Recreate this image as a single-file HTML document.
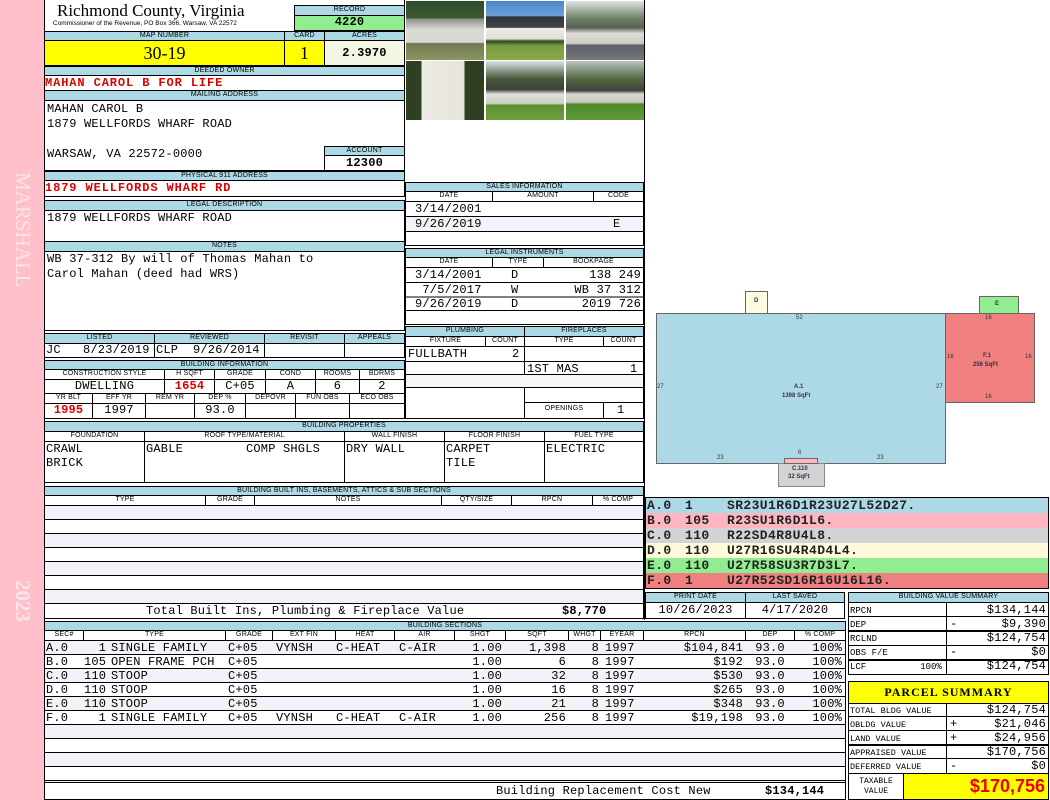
<!DOCTYPE html>
<html><head><meta charset="utf-8"><style>
*{margin:0;padding:0;box-sizing:border-box}
body{width:1050px;height:800px;position:relative;background:#fff;overflow:hidden;font-family:"Liberation Mono",monospace;font-size:12px;letter-spacing:.2px;color:#000}
div{position:absolute}
.b{border:1px solid #000}
.h{background:#add8e6;border:1px solid #000;font-family:"Liberation Sans",sans-serif;font-size:7px;text-align:center;line-height:8px;letter-spacing:.2px;white-space:nowrap;overflow:hidden}
.s{border:1px solid #000;font-family:"Liberation Sans",sans-serif;font-size:7px;letter-spacing:.2px;text-align:center;line-height:8px;white-space:nowrap;overflow:hidden}
.v{border:1px solid #000;white-space:pre;line-height:13px;overflow:hidden}
.r{text-align:right;padding-right:3px}
.c{text-align:center}
.red{color:#d00;font-weight:bold}
.ph{border:1px solid #fff;overflow:hidden}
.sk{font-family:"Liberation Sans",sans-serif;font-size:6px;letter-spacing:0;color:#334;white-space:nowrap}
.col{white-space:pre;line-height:14px;top:641px}
.cd{white-space:pre;line-height:15px;font-size:13px;letter-spacing:.4px;color:#222;font-weight:bold;top:498px}
</style></head><body>
<div style="left:0;top:0;width:44px;height:800px;background:#ffc0cb"></div>
<div style="left:44px;top:0;width:1px;height:800px;background:#000"></div>
<div style="left:10px;top:172px;width:26px;height:112px;"><div style="left:26px;top:0;transform-origin:0 0;transform:rotate(90deg);font-family:'Liberation Serif',serif;font-size:21px;letter-spacing:0;color:#fbe4e8;white-space:nowrap;line-height:26px">MARSHALL</div></div>
<div style="left:10px;top:580px;width:26px;height:50px;"><div style="left:26px;top:0;transform-origin:0 0;transform:rotate(90deg);font-family:'Liberation Serif',serif;font-size:21px;letter-spacing:0;color:#fbe4e8;white-space:nowrap;line-height:26px;font-weight:bold">2023</div></div>

<div style="left:57px;top:1px;font-family:'Liberation Serif',serif;font-size:17px;letter-spacing:0;line-height:20px;white-space:nowrap">Richmond County, Virginia</div>
<div style="left:53px;top:20px;font-family:'Liberation Sans',sans-serif;font-size:6.5px;letter-spacing:0;line-height:8px;white-space:nowrap">Commissioner of the Revenue, PO Box 366, Warsaw, VA 22572</div>
<div class="h" style="left:294px;top:5px;width:111px;height:11px">RECORD</div>
<div class="v c" style="left:294px;top:15px;width:111px;height:16px;background:#90ee90;font-weight:bold">4220</div>

<div class="h" style="left:44px;top:31px;width:241px;height:10px">MAP NUMBER</div>
<div class="h" style="left:284px;top:31px;width:41px;height:10px">CARD</div>
<div class="h" style="left:324px;top:31px;width:81px;height:10px">ACRES</div>
<div class="b" style="left:44px;top:40px;width:241px;height:26px;background:#ffff00;font-family:'Liberation Serif',serif;font-size:18px;letter-spacing:0;text-align:center;line-height:24px">30-19</div>
<div class="b" style="left:284px;top:40px;width:41px;height:26px;background:#ffff00;font-family:'Liberation Serif',serif;font-size:18px;text-align:center;line-height:24px">1</div>
<div class="b" style="left:324px;top:40px;width:81px;height:26px;background:#f5f5e3;text-align:center;line-height:24px;font-weight:bold">2.3970</div>

<div class="h" style="left:44px;top:66px;width:361px;height:10px">DEEDED OWNER</div>
<div class="v red" style="left:44px;top:75px;width:361px;height:16px;line-height:15px;letter-spacing:.9px">MAHAN CAROL B FOR LIFE</div>
<div class="h" style="left:44px;top:90px;width:361px;height:11px">MAILING ADDRESS</div>
<div class="b" style="left:44px;top:100px;width:361px;height:71px;white-space:pre;line-height:15px;padding:1px 0 0 2px">MAHAN CAROL B
1879 WELLFORDS WHARF ROAD

WARSAW, VA 22572-0000</div>
<div class="h" style="left:324px;top:146px;width:81px;height:10px">ACCOUNT</div>
<div class="v c" style="left:324px;top:155px;width:81px;height:16px;font-weight:bold;line-height:15px">12300</div>
<div class="h" style="left:44px;top:171px;width:361px;height:10px">PHYSICAL 911 ADDRESS</div>
<div class="v red" style="left:44px;top:180px;width:361px;height:17px;line-height:15px;letter-spacing:.9px">1879 WELLFORDS WHARF RD</div>

<div class="h" style="left:44px;top:200px;width:361px;height:11px">LEGAL DESCRIPTION</div>
<div class="v" style="left:44px;top:210px;width:361px;height:32px;padding-left:2px;line-height:15px">1879 WELLFORDS WHARF ROAD</div>
<div class="h" style="left:44px;top:241px;width:361px;height:11px">NOTES</div>
<div class="v" style="left:44px;top:251px;width:361px;height:80px;padding-left:2px;line-height:15px">WB 37-312 By will of Thomas Mahan to
Carol Mahan (deed had WRS)</div>

<div class="h" style="left:44px;top:333px;width:111px;height:11px">LISTED</div>
<div class="h" style="left:154px;top:333px;width:111px;height:11px">REVIEWED</div>
<div class="h" style="left:264px;top:333px;width:81px;height:11px">REVISIT</div>
<div class="h" style="left:344px;top:333px;width:61px;height:11px">APPEALS</div>
<div class="v" style="left:44px;top:343px;width:111px;height:15px;padding-left:1px">JC   8/23/2019</div>
<div class="v" style="left:154px;top:343px;width:111px;height:15px;padding-left:1px">CLP  9/26/2014</div>
<div class="v" style="left:264px;top:343px;width:81px;height:15px"></div>
<div class="v" style="left:344px;top:343px;width:61px;height:15px"></div>

<div class="h" style="left:44px;top:360px;width:361px;height:10px">BUILDING INFORMATION</div>
<div class="s" style="left:44px;top:369px;width:121px;height:11px">CONSTRUCTION STYLE</div>
<div class="s" style="left:164px;top:369px;width:51px;height:11px">H SQFT</div>
<div class="s" style="left:214px;top:369px;width:52px;height:11px">GRADE</div>
<div class="s" style="left:265px;top:369px;width:51px;height:11px">COND</div>
<div class="s" style="left:315px;top:369px;width:45px;height:11px">ROOMS</div>
<div class="s" style="left:359px;top:369px;width:46px;height:11px">BDRMS</div>
<div class="v c" style="left:44px;top:379px;width:121px;height:15px">DWELLING</div>
<div class="v c red" style="left:164px;top:379px;width:51px;height:15px">1654</div>
<div class="v c" style="left:214px;top:379px;width:52px;height:15px">C+05</div>
<div class="v c" style="left:265px;top:379px;width:51px;height:15px">A</div>
<div class="v c" style="left:315px;top:379px;width:45px;height:15px">6</div>
<div class="v c" style="left:359px;top:379px;width:46px;height:15px">2</div>
<div class="s" style="left:44px;top:393px;width:49px;height:11px">YR BLT</div>
<div class="s" style="left:92px;top:393px;width:54px;height:11px">EFF YR</div>
<div class="s" style="left:145px;top:393px;width:50px;height:11px">REM YR</div>
<div class="s" style="left:194px;top:393px;width:52px;height:11px">DEP %</div>
<div class="s" style="left:245px;top:393px;width:51px;height:11px">DEPOVR</div>
<div class="s" style="left:295px;top:393px;width:55px;height:11px">FUN OBS</div>
<div class="s" style="left:349px;top:393px;width:56px;height:11px">ECO OBS</div>
<div class="v c red" style="left:44px;top:403px;width:49px;height:16px">1995</div>
<div class="v c" style="left:92px;top:403px;width:54px;height:16px">1997</div>
<div class="v" style="left:145px;top:403px;width:50px;height:16px"></div>
<div class="v c" style="left:194px;top:403px;width:52px;height:16px">93.0</div>
<div class="v" style="left:245px;top:403px;width:51px;height:16px"></div>
<div class="v" style="left:295px;top:403px;width:55px;height:16px"></div>
<div class="v" style="left:349px;top:403px;width:56px;height:16px"></div>

<div class="ph" style="left:405px;top:0;width:80px;height:61px;background:linear-gradient(#2f4d2a 0,#3b5a33 30%,#8a8f88 30%,#d9d9d4 48%,#d9d9d4 70%,#6f7a55 72%,#8c9460 100%)"></div>
<div class="ph" style="left:485px;top:0;width:80px;height:61px;background:linear-gradient(#4d86c8 0,#6ea0d8 25%,#2e3338 27%,#444 45%,#ecebe5 46%,#e0ded6 64%,#2f4a22 68%,#7a9a40 76%,#8aaa48 100%)"></div>
<div class="ph" style="left:565px;top:0;width:80px;height:61px;background:linear-gradient(#dfe3e2 0,#6e8063 30%,#595f5a 45%,#dddcd6 55%,#cfcbc2 72%,#5d6068 75%,#777 100%)"></div>
<div class="ph" style="left:405px;top:60px;width:80px;height:61px;background:linear-gradient(90deg,#2d4022 0,#2d4022 20%,#ecebe4 20%,#e6e4da 75%,#2e3f21 75%)"></div>
<div class="ph" style="left:485px;top:60px;width:80px;height:61px;background:linear-gradient(#d9e3e6 0,#48593c 30%,#3a4038 48%,#e0e0da 56%,#cfd0c8 72%,#5c8f32 75%,#6fa03a 100%)"></div>
<div class="ph" style="left:565px;top:60px;width:80px;height:61px;background:linear-gradient(#b8c4c0 0,#556a40 30%,#3c4240 50%,#d9d9d2 56%,#c9c9c0 70%,#4f8a2a 73%,#5f9a36 100%)"></div>
<div style="left:404px;top:0;width:1px;height:121px;background:#000"></div>
<div style="left:644px;top:0;width:1px;height:620px;background:#000"></div>

<div class="h" style="left:405px;top:182px;width:239px;height:10px">SALES INFORMATION</div>
<div class="s" style="left:405px;top:191px;width:88px;height:11px">DATE</div>
<div class="s" style="left:492px;top:191px;width:102px;height:11px">AMOUNT</div>
<div class="s" style="left:593px;top:191px;width:51px;height:11px">CODE</div>
<div class="b" style="left:405px;top:201px;width:239px;height:45px"></div>
<div style="left:406px;top:216px;width:237px;height:16px;background:#f1f3f8;border-top:1px solid #000;border-bottom:1px solid #000"></div>
<div style="left:415px;top:202px;white-space:pre;line-height:15px">3/14/2001
9/26/2019</div>
<div style="left:613px;top:217px">E</div>

<div class="h" style="left:405px;top:248px;width:239px;height:10px">LEGAL INSTRUMENTS</div>
<div class="s" style="left:405px;top:257px;width:88px;height:11px">DATE</div>
<div class="s" style="left:492px;top:257px;width:52px;height:11px">TYPE</div>
<div class="s" style="left:543px;top:257px;width:101px;height:11px">BOOKPAGE</div>
<div class="b" style="left:405px;top:267px;width:239px;height:58px"></div>
<div style="left:406px;top:282px;width:237px;height:29px;border-top:1px solid #000;border-bottom:1px solid #000;background:linear-gradient(#fff 50%,#000 50%,#000 calc(50% + 1px),#fff calc(50% + 1px))"></div>
<div style="left:415px;top:268px;white-space:pre;line-height:14.5px">3/14/2001
 7/5/2017
9/26/2019</div>
<div style="left:511px;top:268px;white-space:pre;line-height:14.5px">D
W
D</div>
<div style="left:545px;top:268px;width:96px;text-align:right;white-space:pre;line-height:14.5px">138 249
WB 37 312
2019 726</div>

<div class="h" style="left:405px;top:326px;width:120px;height:11px">PLUMBING</div>
<div class="h" style="left:524px;top:326px;width:120px;height:11px">FIREPLACES</div>
<div class="s" style="left:405px;top:336px;width:81px;height:11px">FIXTURE</div>
<div class="s" style="left:485px;top:336px;width:40px;height:11px">COUNT</div>
<div class="s" style="left:524px;top:336px;width:80px;height:11px">TYPE</div>
<div class="s" style="left:603px;top:336px;width:41px;height:11px">COUNT</div>
<div class="b" style="left:405px;top:346px;width:120px;height:73px"></div>
<div class="b" style="left:524px;top:346px;width:120px;height:73px"></div>
<div style="left:406px;top:361px;width:237px;height:1px;background:#000"></div>
<div style="left:406px;top:374px;width:237px;height:14px;background:#f6f6f8;border-top:1px solid #000;border-bottom:1px solid #000"></div>
<div style="left:524px;top:402px;width:120px;height:1px;background:#000"></div>
<div style="left:603px;top:402px;width:1px;height:16px;background:#000"></div>
<div style="left:408px;top:347px">FULLBATH</div><div style="left:512px;top:347px">2</div>
<div style="left:527px;top:362px">1ST MAS</div><div style="left:630px;top:362px">1</div>
<div style="left:524px;top:405px;width:80px;text-align:center;font-family:'Liberation Sans',sans-serif;font-size:7px">OPENINGS</div>
<div style="left:617px;top:403px">1</div>

<div class="h" style="left:44px;top:421px;width:600px;height:11px">BUILDING PROPERTIES</div>
<div class="s" style="left:44px;top:431px;width:101px;height:11px">FOUNDATION</div>
<div class="s" style="left:144px;top:431px;width:201px;height:11px">ROOF TYPE/MATERIAL</div>
<div class="s" style="left:344px;top:431px;width:101px;height:11px">WALL FINISH</div>
<div class="s" style="left:444px;top:431px;width:101px;height:11px">FLOOR FINISH</div>
<div class="s" style="left:544px;top:431px;width:100px;height:11px">FUEL TYPE</div>
<div class="v" style="left:44px;top:441px;width:101px;height:42px;line-height:14px;padding-left:1px">CRAWL
BRICK</div>
<div class="v" style="left:144px;top:441px;width:201px;height:42px;line-height:14px;padding-left:1px">GABLE</div>
<div style="left:246px;top:442px;line-height:14px">COMP SHGLS</div>
<div class="v" style="left:344px;top:441px;width:101px;height:42px;line-height:14px;padding-left:1px">DRY WALL</div>
<div class="v" style="left:444px;top:441px;width:101px;height:42px;line-height:14px;padding-left:1px">CARPET
TILE</div>
<div class="v" style="left:544px;top:441px;width:100px;height:42px;line-height:14px;padding-left:1px">ELECTRIC</div>

<div class="h" style="left:44px;top:486px;width:600px;height:10px">BUILDING BUILT INS, BASEMENTS, ATTICS &amp; SUB SECTIONS</div>
<div class="s" style="left:44px;top:495px;width:162px;height:11px">TYPE</div>
<div class="s" style="left:205px;top:495px;width:50px;height:11px">GRADE</div>
<div class="s" style="left:254px;top:495px;width:188px;height:11px">NOTES</div>
<div class="s" style="left:441px;top:495px;width:71px;height:11px">QTY/SIZE</div>
<div class="s" style="left:511px;top:495px;width:82px;height:11px">RPCN</div>
<div class="s" style="left:592px;top:495px;width:52px;height:11px">% COMP</div>
<div class="b" style="left:44px;top:505px;width:600px;height:99px;background:repeating-linear-gradient(#f1f3f8 0,#f1f3f8 13px,#000 13px,#000 14px,#fff 14px,#fff 27px,#000 27px,#000 28px)"></div>
<div class="v" style="left:44px;top:603px;width:600px;height:16px;line-height:15px;padding-left:101px">Total Built Ins, Plumbing &amp; Fireplace Value</div>
<div style="left:562px;top:604px;line-height:15px;font-weight:bold">$8,770</div>

<div class="h" style="left:44px;top:621px;width:802px;height:10px">BUILDING SECTIONS</div>
<div class="s" style="left:44px;top:630px;width:40px;height:11px">SEC#</div>
<div class="s" style="left:83px;top:630px;width:143px;height:11px">TYPE</div>
<div class="s" style="left:225px;top:630px;width:48px;height:11px">GRADE</div>
<div class="s" style="left:272px;top:630px;width:64px;height:11px">EXT FIN</div>
<div class="s" style="left:335px;top:630px;width:60px;height:11px">HEAT</div>
<div class="s" style="left:394px;top:630px;width:61px;height:11px">AIR</div>
<div class="s" style="left:454px;top:630px;width:52px;height:11px">SHGT</div>
<div class="s" style="left:505px;top:630px;width:64px;height:11px">SQFT</div>
<div class="s" style="left:568px;top:630px;width:33px;height:11px">WHGT</div>
<div class="s" style="left:600px;top:630px;width:44px;height:11px">EYEAR</div>
<div class="s" style="left:643px;top:630px;width:103px;height:11px">RPCN</div>
<div class="s" style="left:745px;top:630px;width:50px;height:11px">DEP</div>
<div class="s" style="left:794px;top:630px;width:52px;height:11px">% COMP</div>
<div class="b" style="left:44px;top:640px;width:802px;height:143px;background:repeating-linear-gradient(#f1f3f8 0,#f1f3f8 13px,#000 13px,#000 14px,#fff 14px,#fff 27px,#000 27px,#000 28px)"></div>
<div class="col" style="left:46px">A.0
B.0
C.0
D.0
E.0
F.0</div>
<div class="col" style="left:84px;width:22px;text-align:right">1
105
110
110
110
1</div>
<div class="col" style="left:111px">SINGLE FAMILY
OPEN FRAME PCH
STOOP
STOOP
STOOP
SINGLE FAMILY</div>
<div class="col" style="left:228px">C+05
C+05
C+05
C+05
C+05
C+05</div>
<div class="col" style="left:276px">VYNSH




VYNSH</div>
<div class="col" style="left:336px">C-HEAT




C-HEAT</div>
<div class="col" style="left:399px">C-AIR




C-AIR</div>
<div class="col" style="left:455px;width:47px;text-align:right">1.00
1.00
1.00
1.00
1.00
1.00</div>
<div class="col" style="left:505px;width:61px;text-align:right">1,398
6
32
16
21
256</div>
<div class="col" style="left:570px;width:29px;text-align:right">8
8
8
8
8
8</div>
<div class="col" style="left:605px">1997
1997
1997
1997
1997
1997</div>
<div class="col" style="left:645px;width:98px;text-align:right">$104,841
$192
$530
$265
$348
$19,198</div>
<div class="col" style="left:745px;width:50px;text-align:center">93.0
93.0
93.0
93.0
93.0
93.0</div>
<div class="col" style="left:795px;width:47px;text-align:right">100%
100%
100%
100%
100%
100%</div>
<div class="v" style="left:44px;top:782px;width:802px;height:18px;line-height:17px;padding-left:451px">Building Replacement Cost New</div>
<div style="left:765px;top:783px;line-height:17px;font-weight:bold">$134,144</div>

<div style="left:656px;top:313px;width:290px;height:151px;background:#add8e6;border:1px solid #666"></div>
<div style="left:945px;top:313px;width:90px;height:90px;background:#f08080;border:1px solid #666"></div>
<div style="left:745px;top:291px;width:23px;height:23px;background:#fffbe0;border:1px solid #666"></div>
<div style="left:979px;top:296px;width:40px;height:18px;background:#90ee90;border:1px solid #666"></div>
<div style="left:778px;top:463px;width:47px;height:24px;background:#d3d3d3;border:1px solid #888"></div>
<div style="left:784px;top:458px;width:34px;height:6px;background:#ffb6c1;border:1px solid #666"></div>
<div class="sk" style="left:754px;top:298px;font-weight:bold">D</div>
<div class="sk" style="left:995px;top:301px;font-weight:bold">E</div>
<div class="sk" style="left:796px;top:315px">52</div>
<div class="sk" style="left:985px;top:315px">16</div>
<div class="sk" style="left:947px;top:354px">16</div>
<div class="sk" style="left:1025px;top:354px">16</div>
<div class="sk" style="left:985px;top:394px">16</div>
<div class="sk" style="left:983px;top:353px;font-weight:bold">F.1</div>
<div class="sk" style="left:973px;top:362px;font-weight:bold">256 SqFt</div>
<div class="sk" style="left:657px;top:384px">27</div>
<div class="sk" style="left:936px;top:384px">27</div>
<div class="sk" style="left:794px;top:384px;font-weight:bold">A.1</div>
<div class="sk" style="left:782px;top:393px;font-weight:bold">1398 SqFt</div>
<div class="sk" style="left:717px;top:455px">23</div>
<div class="sk" style="left:877px;top:455px">23</div>
<div class="sk" style="left:798px;top:450px">6</div>
<div class="sk" style="left:792px;top:466px;font-weight:bold">C.110</div>
<div class="sk" style="left:788px;top:474px;font-weight:bold">32 SqFt</div>

<div class="b" style="left:645px;top:497px;width:404px;height:92px;background:linear-gradient(#add8e6 0,#add8e6 15px,#ffb6c1 15px,#ffb6c1 30px,#d3d3d3 30px,#d3d3d3 45px,#fffadc 45px,#fffadc 60px,#90ee90 60px,#90ee90 75px,#f08080 75px)"></div>
<div class="cd" style="left:647px">A.0
B.0
C.0
D.0
E.0
F.0</div>
<div class="cd" style="left:685px">1
105
110
110
110
1</div>
<div class="cd" style="left:727px">SR23U1R6D1R23U27L52D27.
R23SU1R6D1L6.
R22SD4R8U4L8.
U27R16SU4R4D4L4.
U27R58SU3R7D3L7.
U27R52SD16R16U16L16.</div>

<div class="h" style="left:645px;top:592px;width:101px;height:11px">PRINT DATE</div>
<div class="h" style="left:745px;top:592px;width:100px;height:11px">LAST SAVED</div>
<div class="v c" style="left:645px;top:602px;width:101px;height:17px;line-height:15px">10/26/2023</div>
<div class="v c" style="left:745px;top:602px;width:100px;height:17px;line-height:15px">4/17/2020</div>

<div class="h" style="left:848px;top:592px;width:201px;height:11px">BUILDING VALUE SUMMARY</div>
<div class="b" style="left:848px;top:602px;width:201px;height:73px"></div>
<div style="left:849px;top:616px;width:199px;height:1px;background:#000"></div>
<div style="left:849px;top:630px;width:199px;height:2px;background:#000"></div>
<div style="left:849px;top:645px;width:199px;height:1px;background:#000"></div>
<div style="left:849px;top:659px;width:199px;height:2px;background:#000"></div>
<div style="left:946px;top:603px;width:1px;height:71px;background:#000"></div>
<div style="left:850px;top:604px;font-size:9px;letter-spacing:0;line-height:14px;white-space:pre">RPCN
DEP
RCLND
OBS F/E
LCF          100%</div>
<div style="left:948px;top:603px;width:98px;text-align:right;white-space:pre;line-height:14px;font-size:12px">$134,144
$9,390
$124,754
$0
$124,754</div>
<div style="left:950px;top:617px;font-size:12px;line-height:14px">-</div>
<div style="left:950px;top:645px;font-size:12px;line-height:14px">-</div>

<div class="b" style="left:848px;top:681px;width:201px;height:23px;background:#ffff00;text-align:center;font-family:'Liberation Serif',serif;font-weight:bold;font-size:12px;line-height:21px;letter-spacing:1px">PARCEL SUMMARY</div>
<div class="b" style="left:848px;top:703px;width:201px;height:71px"></div>
<div style="left:849px;top:716px;width:199px;height:1px;background:#000"></div>
<div style="left:849px;top:730px;width:199px;height:1px;background:#000"></div>
<div style="left:849px;top:744px;width:199px;height:2px;background:#000"></div>
<div style="left:849px;top:758px;width:199px;height:1px;background:#000"></div>
<div style="left:946px;top:704px;width:1px;height:69px;background:#000"></div>
<div style="left:850px;top:704px;font-size:8.5px;letter-spacing:0;line-height:14px;white-space:pre">TOTAL BLDG VALUE
OBLDG VALUE
LAND VALUE
APPRAISED VALUE
DEFERRED VALUE</div>
<div style="left:948px;top:703px;width:98px;text-align:right;white-space:pre;line-height:14px;font-size:12px">$124,754
$21,046
$24,956
$170,756
$0</div>
<div style="left:950px;top:717px;font-size:12px;line-height:14px;white-space:pre">+
+

-</div>
<div class="b" style="left:848px;top:773px;width:56px;height:27px;font-size:8px;letter-spacing:0;line-height:10px;text-align:center;padding-top:3px">TAXABLE<br>VALUE</div>
<div class="b" style="left:903px;top:773px;width:146px;height:27px;background:#ffff00;color:#e00;font-family:'Liberation Sans',sans-serif;font-weight:bold;font-size:18px;letter-spacing:0;text-align:right;line-height:25px;padding-right:3px">$170,756</div>
</body></html>
